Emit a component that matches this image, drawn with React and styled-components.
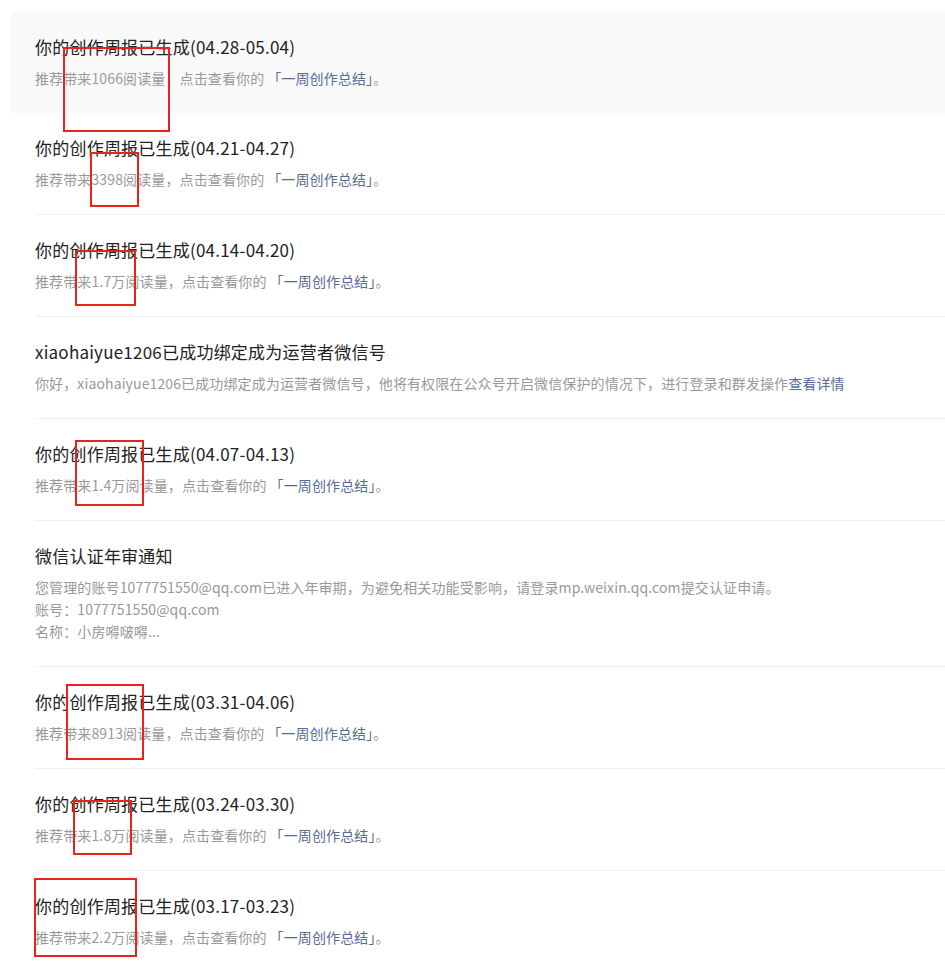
import React from "react";
import styled, { createGlobalStyle } from "styled-components";

const Global = createGlobalStyle`
  html, body { margin: 0; padding: 0; background: #fff; }
  body { font-family: "Microsoft YaHei", "Noto Sans CJK SC", "Noto Sans", sans-serif; overflow: hidden; }
`;

const Page = styled.div`
  position: relative;
  width: 945px;
  height: 966px;
  overflow: hidden;
  padding-top: 12px;
  box-sizing: border-box;
`;

const List = styled.ul`
  list-style: none;
  margin: 0 0 0 11px;
  padding: 0;
  width: 960px;
`;

const Item = styled.li`
  padding-left: 24px;
  background: ${(p) => (p.$active ? "#f9f9f9" : "transparent")};
  border-radius: 4px 0 0 4px;
`;

const Inner = styled.div`
  padding: 23px 0 24px;
  border-bottom: ${(p) => (p.$active ? "none" : "1px solid #eeeeee")};
`;

const Title = styled.div`
  font-size: 17px;
  line-height: 24px;
  color: #222;
  letter-spacing: 0.22px;
  margin-bottom: 8px;
`;

const Desc = styled.div`
  font-size: 14px;
  line-height: 22px;
  letter-spacing: 0.12px;
  color: #999;
`;

const Link = styled.span`
  color: #576b95;
  padding-left: ${(p) => (p.$bracket ? "3px" : "0")};
`;

const Mark = styled.div`
  position: absolute;
  border: 2px solid #e8231b;
  box-sizing: border-box;
`;

const weekly = (range, count) => ({
  title: `你的创作周报已生成(${range})`,
  desc: [
    <>
      推荐带来{count}阅读量，点击查看你的<Link $bracket>「一周创作总结」</Link>。
    </>,
  ],
});

const items = [
  { ...weekly("04.28-05.04", "1066"), active: true },
  weekly("04.21-04.27", "3398"),
  weekly("04.14-04.20", "1.7万"),
  {
    title: "xiaohaiyue1206已成功绑定成为运营者微信号",
    desc: [
      <>
        你好，xiaohaiyue1206已成功绑定成为运营者微信号，他将有权限在公众号开启微信保护的情况下，进行登录和群发操作
        <Link>查看详情</Link>
      </>,
    ],
  },
  weekly("04.07-04.13", "1.4万"),
  {
    title: "微信认证年审通知",
    desc: [
      "您管理的账号1077751550@qq.com已进入年审期，为避免相关功能受影响，请登录mp.weixin.qq.com提交认证申请。",
      "账号：1077751550@qq.com",
      "名称：小房嘚啵嘚...",
    ],
  },
  weekly("03.31-04.06", "8913"),
  weekly("03.24-03.30", "1.8万"),
  weekly("03.17-03.23", "2.2万"),
];

const marks = [
  [63, 47, 107, 85],
  [90, 152, 49, 55],
  [75, 250, 61, 56],
  [75, 440, 69, 66],
  [66, 684, 78, 76],
  [73, 800, 59, 55],
  [34, 878, 103, 79],
];

export default function App() {
  return (
    <>
      <Global />
      <Page>
        <List>
          {items.map((it, i) => (
            <Item key={i} $active={it.active}>
              <Inner $active={it.active}>
                <Title>{it.title}</Title>
                {it.desc.map((d, j) => (
                  <Desc key={j}>{d}</Desc>
                ))}
              </Inner>
            </Item>
          ))}
        </List>
        {marks.map(([x, y, w, h], i) => (
          <Mark key={i} style={{ left: x, top: y, width: w, height: h }} />
        ))}
      </Page>
    </>
  );
}
